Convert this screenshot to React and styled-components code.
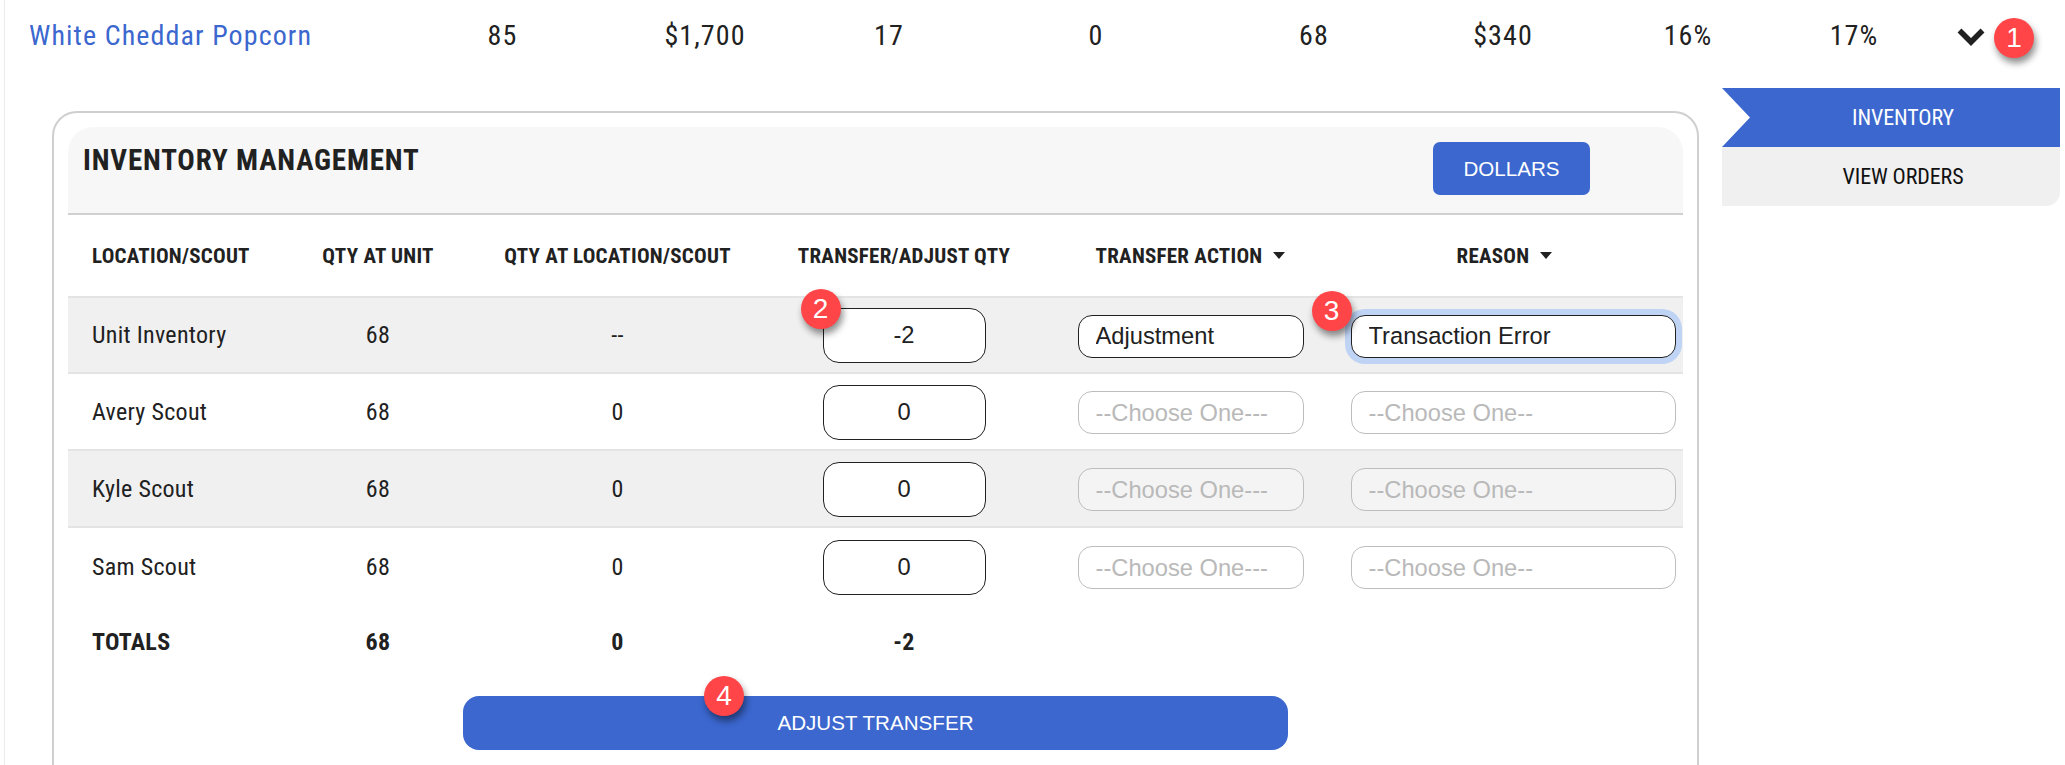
import React from 'react';
import styled, { createGlobalStyle } from 'styled-components';

const BLUE = '#3b67cf';
const INK = '#212121';
const ARIAL = '"Liberation Sans", Arial, sans-serif';
const COLUMNS = '223px 174px 305px 268px 305px 340px';

const Global = createGlobalStyle`
  html, body { margin: 0; padding: 0; background: #fff; }
  body {
    font-family: Roboto, sans-serif;
    font-stretch: 75%;
    color: ${INK};
    overflow: hidden;
  }
`;

const Page = styled.div`
  width: 2061px;
  height: 765px;
  overflow: hidden;
  box-sizing: border-box;
  border-left: 1px solid #ececec;
  margin-left: 4px;
`;

const ProductRow = styled.div`
  display: grid;
  grid-template-columns: 395px 205px 200px 168px 246px 190px 188px 182px 150px 84px;
  height: 70px;
  margin-bottom: 18px;
  align-items: center;
  font-size: 28px;
  letter-spacing: 1.1px;
  text-align: center;
`;

const ProductName = styled.a`
  color: ${BLUE};
  text-align: left;
  padding-left: 24px;
`;

const ChevronCell = styled.div`
  position: relative;
  height: 100%;
  display: flex;
  align-items: center;
  justify-content: center;
`;

const Chevron = styled.svg`
  width: 30px;
  height: 20px;
  margin-top: 4px;
`;

const Badge = styled.span`
  position: absolute;
  left: ${p => p.$left}px;
  top: ${p => p.$top}px;
  width: 40px;
  height: 40px;
  border-radius: 50%;
  background: #ff4548;
  color: #fff;
  font-family: ${ARIAL};
  font-stretch: normal;
  font-size: 28px;
  font-weight: 400;
  letter-spacing: 0;
  line-height: 40px;
  text-align: center;
  box-shadow: 2px 5px 7px rgba(0, 0, 0, 0.45);
  z-index: 2;
`;

const Body = styled.div`
  display: flex;
  align-items: flex-start;
`;

const Card = styled.section`
  width: 1647px;
  height: 700px;
  box-sizing: border-box;
  margin: 23px 0 0 47px;
  padding: 14px 14px 0 14px;
  border: 2px solid #cfcfcf;
  border-radius: 25px;
  flex: none;
`;

const CardHeader = styled.header`
  height: 88px;
  box-sizing: border-box;
  display: flex;
  justify-content: space-between;
  align-items: flex-start;
  background: #f7f7f7;
  border-bottom: 2px solid #d0d0d0;
  border-radius: 25px 25px 0 0;
  padding: 0 93px 0 15px;
`;

const CardTitle = styled.h2`
  margin: 15px 0 0;
  font-size: 29px;
  line-height: 36px;
  font-weight: 700;
  letter-spacing: 0.85px;
`;

const UnitButton = styled.button`
  margin-top: 15px;
  width: 157px;
  height: 53px;
  border: 0;
  border-radius: 7px;
  background: ${BLUE};
  color: #fff;
  font-family: ${ARIAL};
  font-size: 20.6px;
`;

const HeadRow = styled.div`
  display: grid;
  grid-template-columns: ${COLUMNS};
  height: 83px;
  box-sizing: border-box;
  align-items: center;
  text-align: center;
  font-size: 21px;
  font-weight: 700;
  letter-spacing: 0.25px;
  border-bottom: 2px solid #e4e4e4;
`;

const RowLabelHead = styled.span`
  text-align: left;
  padding-left: 24px;
`;

const MenuHead = styled.span`
  display: flex;
  align-items: center;
  justify-content: center;
  gap: 11px;
  padding-right: ${p => p.$inset || 0}px;
  &::after {
    content: '';
    border-top: 7px solid ${INK};
    border-left: 6px solid transparent;
    border-right: 6px solid transparent;
  }
`;

const Row = styled.div`
  display: grid;
  grid-template-columns: ${COLUMNS};
  height: 77px;
  box-sizing: border-box;
  align-items: center;
  justify-items: center;
  font-size: 24px;
  letter-spacing: 0.3px;
  background: ${p => (p.$shaded ? '#f0f0f0' : '#fff')};
  border-bottom: 2px solid #e4e4e4;
  &:first-of-type { height: 76px; }
  &:last-of-type { border-bottom: 0; }
`;

const RowLabel = styled.span`
  justify-self: start;
  padding-left: 24px;
`;

const Field = styled.div`
  position: relative;
`;

const QtyInput = styled.input`
  display: block;
  width: 163px;
  height: 55px;
  margin-top: 1px;
  box-sizing: border-box;
  border: 1.5px solid ${INK};
  border-radius: 16px;
  background: #fff;
  color: ${INK};
  text-align: center;
  font-family: ${ARIAL};
  font-size: 23.7px;
  outline: none;
`;

const Select = styled.select`
  display: block;
  appearance: none;
  width: ${p => p.$w}px;
  height: 43px;
  margin-top: 2px;
  box-sizing: border-box;
  padding: 0 0 0 17px;
  opacity: 1;
  border: 1.5px solid ${p => (p.$filled ? INK : '#bdbdbd')};
  border-radius: 14px;
  background: ${p => (p.$filled ? '#fff' : p.$shaded ? '#f4f4f4' : '#fff')};
  color: ${p => (p.$filled ? INK : '#b9b9b9')};
  font-family: ${ARIAL};
  font-size: 23.7px;
  outline: none;
  box-shadow: ${p => (p.$focused ? '0 0 0 6px #bfd3f5' : 'none')};
`;

const TotalsRow = styled.div`
  display: grid;
  grid-template-columns: ${COLUMNS};
  height: 74px;
  align-items: center;
  justify-items: center;
  font-size: 24px;
  font-weight: 700;
  letter-spacing: 0.3px;
`;

const SubmitWrap = styled.div`
  position: relative;
  margin: 17px 0 0 395px;
  width: 825px;
`;

const SubmitButton = styled.button`
  display: block;
  width: 100%;
  height: 54px;
  border: 0;
  border-radius: 16px;
  background: ${BLUE};
  color: #fff;
  font-family: ${ARIAL};
  font-size: 20.6px;
`;

const Tabs = styled.nav`
  margin-left: 23px;
  width: 338px;
  flex: none;
  text-align: center;
`;

const ActiveTab = styled.div`
  height: 59px;
  line-height: 59px;
  padding-left: 24px;
  background: ${BLUE};
  color: #fff;
  font-size: 22px;
  letter-spacing: -0.1px;
  clip-path: polygon(0 0, 100% 0, 100% 100%, 0 100%, 28px 50%);
`;

const PlainTab = styled.div`
  height: 59px;
  line-height: 59px;
  padding-left: 24px;
  background: #f0f0f0;
  color: #111;
  font-size: 22px;
  letter-spacing: -0.1px;
  border-radius: 0 0 14px 0;
`;

const people = [
  { name: 'Unit Inventory', at: '--', qty: '-2', action: 'Adjustment', reason: 'Transaction Error', filled: true },
  { name: 'Avery Scout', at: '0', qty: '0', action: '--Choose One---', reason: '--Choose One--' },
  { name: 'Kyle Scout', at: '0', qty: '0', action: '--Choose One---', reason: '--Choose One--' },
  { name: 'Sam Scout', at: '0', qty: '0', action: '--Choose One---', reason: '--Choose One--' },
];

const stats = ['85', '$1,700', '17', '0', '68', '$340', '16%', '17%'];

export default function App() {
  return (
    <Page>
      <Global />
      <ProductRow>
        <ProductName>White Cheddar Popcorn</ProductName>
        {stats.map((s, i) => (
          <span key={i}>{s}</span>
        ))}
        <ChevronCell>
          <Chevron viewBox="0 0 30 20">
            <path d="M3.5 3.5 L15 15 L26.5 3.5" fill="none" stroke={INK} strokeWidth="5.5" />
          </Chevron>
          <Badge $left={65} $top={18}>1</Badge>
        </ChevronCell>
      </ProductRow>
      <Body>
        <Card>
          <CardHeader>
            <CardTitle>INVENTORY MANAGEMENT</CardTitle>
            <UnitButton>DOLLARS</UnitButton>
          </CardHeader>
          <HeadRow>
            <RowLabelHead>LOCATION/SCOUT</RowLabelHead>
            <span>QTY AT UNIT</span>
            <span>QTY AT LOCATION/SCOUT</span>
            <span>TRANSFER/ADJUST QTY</span>
            <MenuHead>TRANSFER ACTION</MenuHead>
            <MenuHead $inset={17}>REASON</MenuHead>
          </HeadRow>
          <div>
            {people.map((p, i) => (
              <Row key={p.name} $shaded={i % 2 === 0}>
                <RowLabel>{p.name}</RowLabel>
                <span>68</span>
                <span>{p.at}</span>
                <Field>
                  <QtyInput readOnly value={p.qty} />
                  {i === 0 && <Badge $left={-22} $top={-18}>2</Badge>}
                </Field>
                <Select $w={226} $filled={p.filled} $shaded={i % 2 === 0} disabled={!p.filled} value={p.action} onChange={() => {}}>
                  <option>{p.action}</option>
                </Select>
                <Field>
                  <Select $w={325} $filled={p.filled} $focused={p.filled} $shaded={i % 2 === 0} disabled={!p.filled} value={p.reason} onChange={() => {}}>
                    <option>{p.reason}</option>
                  </Select>
                  {i === 0 && <Badge $left={-39} $top={-22}>3</Badge>}
                </Field>
              </Row>
            ))}
          </div>
          <TotalsRow>
            <RowLabel>TOTALS</RowLabel>
            <span>68</span>
            <span>0</span>
            <span>-2</span>
          </TotalsRow>
          <SubmitWrap>
            <SubmitButton>ADJUST TRANSFER</SubmitButton>
            <Badge $left={241} $top={-20}>4</Badge>
          </SubmitWrap>
        </Card>
        <Tabs>
          <ActiveTab>INVENTORY</ActiveTab>
          <PlainTab>VIEW ORDERS</PlainTab>
        </Tabs>
      </Body>
    </Page>
  );
}
